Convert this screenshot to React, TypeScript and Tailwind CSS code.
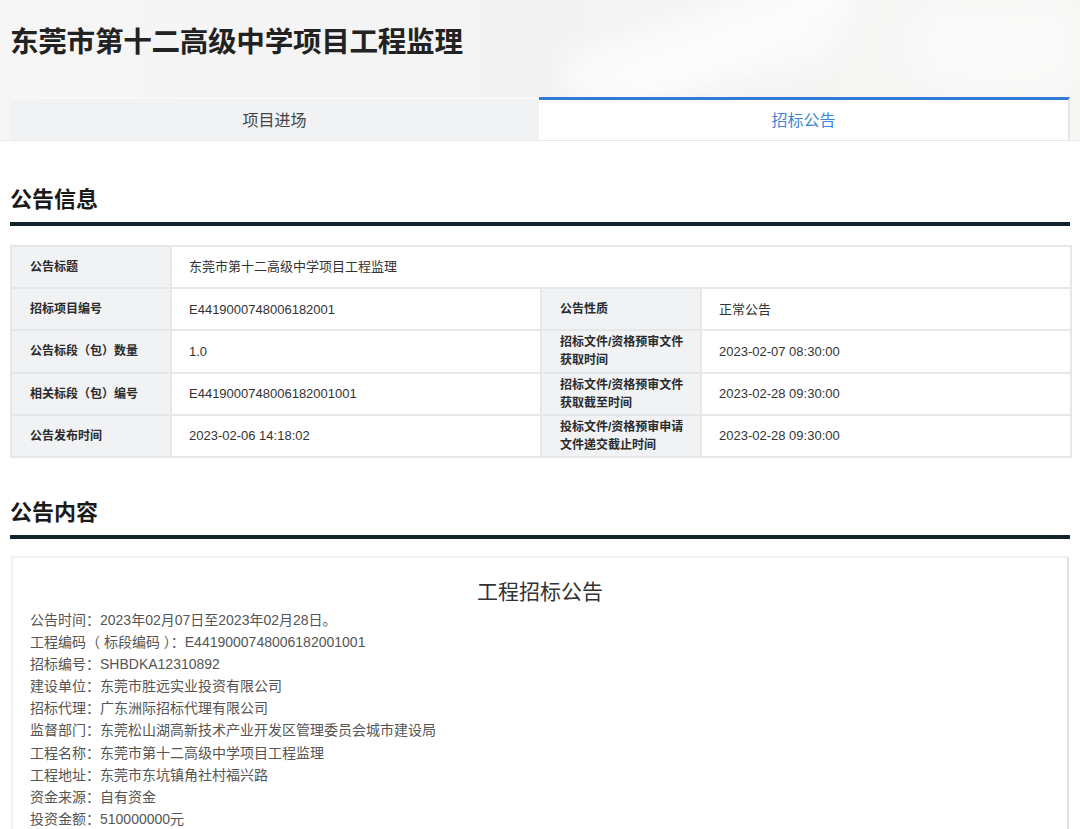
import React from "react";

const FONT = '"Liberation Sans", "Noto Sans CJK SC", sans-serif';

type Cell = { label: React.ReactNode; value: string };

function Label({ children }: { children: React.ReactNode }) {
  return (
    <td className="w-[160px] bg-[#f1f2f4] border-2 border-[#e6e7e9] pl-[18px] pr-2 text-[12px] font-bold text-[#2b2b2b] leading-[18px] align-middle">
      {children}
    </td>
  );
}

function Value({ children, span }: { children: React.ReactNode; span?: number }) {
  return (
    <td
      colSpan={span}
      className="bg-white border-2 border-[#e6e7e9] pl-[17px] text-[13px] text-[#333] align-middle"
    >
      {children}
    </td>
  );
}

function SectionTitle({ children }: { children: React.ReactNode }) {
  return (
    <div className="mx-[10px]">
      <h2 className="text-[22px] font-bold text-[#1a1a1a] leading-[33px]">{children}</h2>
      <div className="mt-[6px] h-[4px] bg-[#13242c]" />
    </div>
  );
}

export default function App() {
  const rows: [Cell, Cell | null][] = [
    [{ label: "公告标题", value: "东莞市第十二高级中学项目工程监理" }, null],
    [
      { label: "招标项目编号", value: "E4419000748006182001" },
      { label: "公告性质", value: "正常公告" },
    ],
    [
      { label: "公告标段（包）数量", value: "1.0" },
      {
        label: (
          <>
            招标文件/资格预审文件
            <br />
            获取时间
          </>
        ),
        value: "2023-02-07 08:30:00",
      },
    ],
    [
      { label: "相关标段（包）编号", value: "E4419000748006182001001" },
      {
        label: (
          <>
            招标文件/资格预审文件
            <br />
            获取截至时间
          </>
        ),
        value: "2023-02-28 09:30:00",
      },
    ],
    [
      { label: "公告发布时间", value: "2023-02-06 14:18:02" },
      {
        label: (
          <>
            投标文件/资格预审申请
            <br />
            文件递交截止时间
          </>
        ),
        value: "2023-02-28 09:30:00",
      },
    ],
  ];

  const lines = [
    "公告时间：2023年02月07日至2023年02月28日。",
    "工程编码（ 标段编码 ）：E4419000748006182001001",
    "招标编号：SHBDKA12310892",
    "建设单位：东莞市胜远实业投资有限公司",
    "招标代理：广东洲际招标代理有限公司",
    "监督部门：东莞松山湖高新技术产业开发区管理委员会城市建设局",
    "工程名称：东莞市第十二高级中学项目工程监理",
    "工程地址：东莞市东坑镇角社村福兴路",
    "资金来源：自有资金",
    "投资金额：510000000元",
  ];

  return (
    <div className="w-[1080px] h-[829px] overflow-hidden bg-white" style={{ fontFamily: FONT }}>
      {/* header */}
      <div className="relative bg-gradient-to-r from-[#f6f6f6] via-[#f3f3f3] to-[#f8f7f5] border-b border-[#e6e7e9]">
        <div className="pointer-events-none absolute left-[560px] top-[10px] h-[60px] w-[300px] rotate-[-18deg] rounded-full bg-white/60 blur-md" />
        <div className="pointer-events-none absolute left-[620px] top-[50px] h-[30px] w-[220px] rotate-[-12deg] rounded-full bg-white/50 blur-md" />
        <div className="pointer-events-none absolute left-[900px] top-[0px] h-[90px] w-[180px] rounded-full bg-white/40 blur-lg" />
        <div className="relative pl-[10px] pt-[23px] h-[97px]">
          <h1 className="text-[28.6px] font-bold text-[#222] leading-[38px] tracking-[-0.3px]">
            东莞市第十二高级中学项目工程监理
          </h1>
        </div>
        <div className="relative flex mx-[10px] h-[43px]">
          <div className="flex-1 flex items-center justify-center bg-[#f0f2f4] border-t-2 border-[#f7f8f9] text-[16px] text-[#444] pt-[2px]">
            项目进场
          </div>
          <div className="flex-1 flex items-center justify-center bg-white border-t-[3px] border-[#2f7bd5] border-r-2 border-r-[#e4e4e4] text-[16px] text-[#3d84d6] pt-[1px]">
            招标公告
          </div>
        </div>
      </div>

      <div className="pt-[42px]">
        <SectionTitle>公告信息</SectionTitle>
        <div className="mx-[10px] mt-[19px]">
          <table className="w-[1062px] border-collapse border-2 border-[#e6e7e9] table-fixed">
            <colgroup>
              <col className="w-[160px]" />
              <col className="w-[370px]" />
              <col className="w-[160px]" />
              <col />
            </colgroup>
            <tbody>
              {rows.map(([a, b], i) => (
                <tr key={i} className="h-[42.2px]">
                  <Label>{a.label}</Label>
                  {b ? (
                    <>
                      <Value>{a.value}</Value>
                      <Label>{b.label}</Label>
                      <Value>{b.value}</Value>
                    </>
                  ) : (
                    <Value span={3}>{a.value}</Value>
                  )}
                </tr>
              ))}
            </tbody>
          </table>
        </div>

        <div className="mt-[38px]">
          <SectionTitle>公告内容</SectionTitle>
        </div>
        <div className="mx-[11px] mt-[17px] border-2 border-[#f1f1f1] border-r-[#e2e2e2] pt-[19px] pb-4">
          <div className="text-center text-[21px] leading-[30px] text-[#333]">工程招标公告</div>
          <div className="mt-[2px] pl-[17px] text-[14px] leading-[22.1px] text-[#555]">
            {lines.map((l) => (
              <div key={l} className="whitespace-pre">{l}</div>
            ))}
          </div>
        </div>
      </div>
    </div>
  );
}
